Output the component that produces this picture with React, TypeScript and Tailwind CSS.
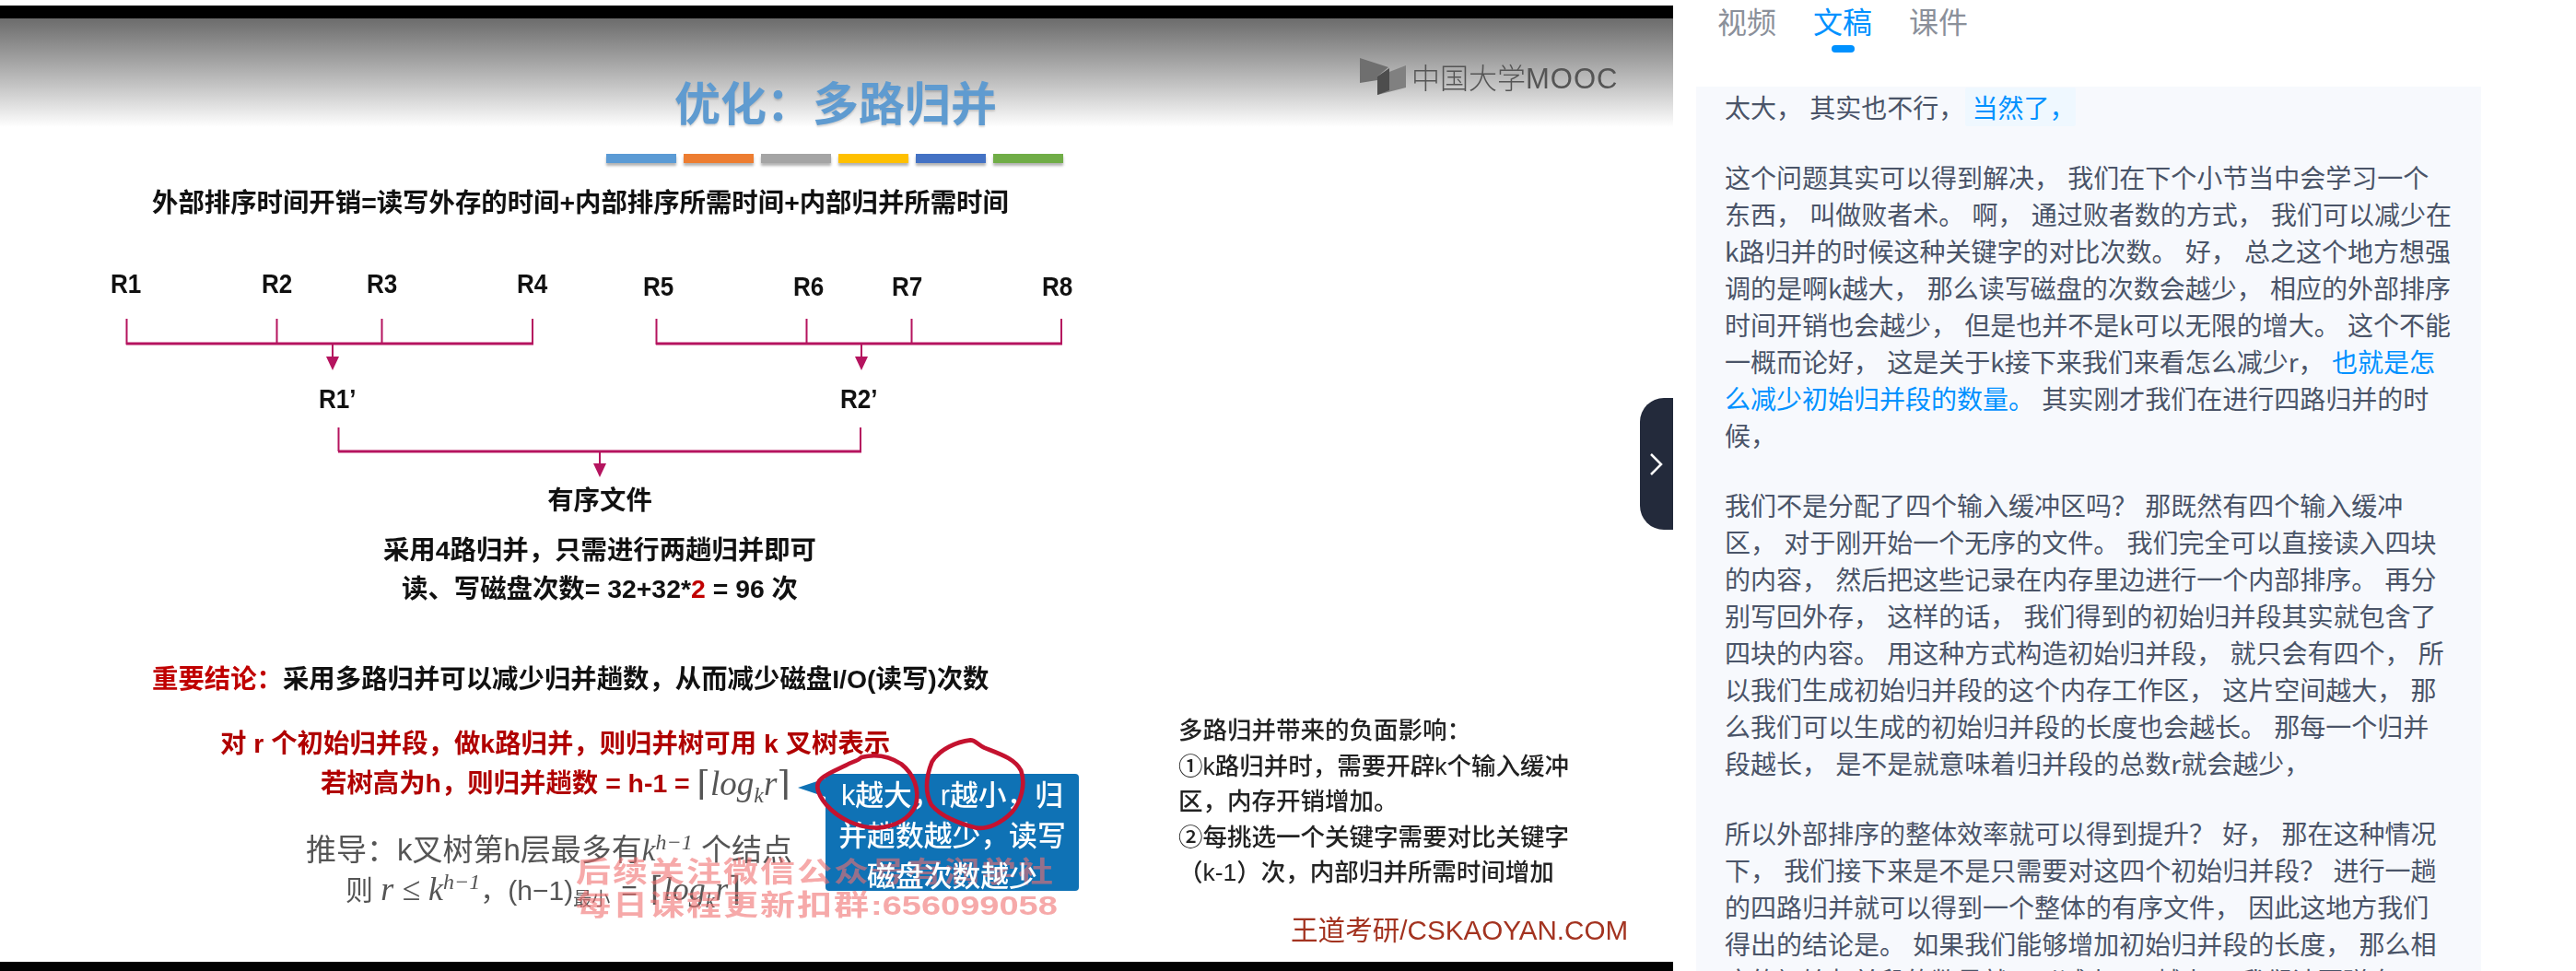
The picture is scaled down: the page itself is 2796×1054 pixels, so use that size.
const tabs = ['视频', '文稿', '课件']

const ruleBars = ['bg-[#5b9bd5]', 'bg-[#ed7d31]', 'bg-[#a5a5a5]', 'bg-[#ffc000]', 'bg-[#4472c4]', 'bg-[#70ad47]']

const topRuns = [
  { label: 'R1', pos: 'left-[120px] top-[273px]' },
  { label: 'R2', pos: 'left-[284px] top-[273px]' },
  { label: 'R3', pos: 'left-[398px] top-[273px]' },
  { label: 'R4', pos: 'left-[561px] top-[273px]' },
  { label: 'R5', pos: 'left-[698px] top-[276px]' },
  { label: 'R6', pos: 'left-[861px] top-[276px]' },
  { label: 'R7', pos: 'left-[968px] top-[276px]' },
  { label: 'R8', pos: 'left-[1131px] top-[276px]' },
  { label: 'R1’', pos: 'left-[346px] top-[398px]' },
  { label: 'R2’', pos: 'left-[912px] top-[398px]' },
]

function MergeDiagram() {
  const c = '#b5145f'
  return (
    <svg className="absolute left-0 top-0" width="1200" height="520" viewBox="0 20 1200 520" fill="none">
      <g stroke={c}>
        <path d="M137.500 346V374M300.500 346V374M414.500 346V374M578 346V374" strokeWidth="2" />
        <path d="M137 373H579" strokeWidth="3" />
        <path d="M712.500 346V374M875.500 346V374M989.500 346V374M1152 346V374" strokeWidth="2" />
        <path d="M712 373H1153" strokeWidth="3" />
        <path d="M361 374V390M935 374V390M651 491V506" strokeWidth="2" />
        <path d="M367.500 464V490M934 464V490" strokeWidth="2" />
        <path d="M367 490H935" strokeWidth="3" />
      </g>
      <g fill={c}>
        <path d="M354 387H368L361 402Z" />
        <path d="M928 387H942L935 402Z" />
        <path d="M644 503H658L651 518Z" />
      </g>
    </svg>
  )
}

function MoocLogo() {
  return (
    <div className="absolute left-[1476px] top-[43px] flex items-start gap-[6px]">
      <svg width="50" height="42" viewBox="0 0 50 42">
        <path d="M0 0L31 10L19 20V24L0 27Z" fill="#6f6f6f" />
        <path d="M19 20L50 8V32L19 40Z" fill="#808080" />
        <path d="M19 20L32 11V35L19 40Z" fill="#4d4d4d" />
      </svg>
      <span className="font-['Noto_Sans_CJK_SC',sans-serif] text-[31px] leading-[40px] font-light text-[#555]">
        中国大学<span className="font-['Liberation_Sans',sans-serif] tracking-[1px]">MOOC</span>
      </span>
    </div>
  )
}

function Ceil({ size }: { size: string }) {
  return (
    <span className={`inline-flex items-baseline font-['Liberation_Serif','DejaVu_Serif',serif] font-normal text-[#555] ${size}`}>
      <span className="font-['DejaVu_Serif',serif] font-extralight">⌈</span>
      <i>log</i>
      <i className="relative top-[8px] text-[0.65em]">k</i>
      <i>r</i>
      <span className="font-['DejaVu_Serif',serif] font-extralight">⌉</span>
    </span>
  )
}

function HandCircles() {
  return (
    <svg className="absolute left-[850px] top-[770px] z-30" width="340" height="190" viewBox="0 0 1020 570" fill="none">
      <g stroke="#c4122f" strokeWidth="14" strokeLinecap="round" strokeLinejoin="round">
        <path d="M205 122C225 108 240 112 255 96C300 85 345 92 385 118C425 150 445 200 432 252C410 300 360 322 305 326C240 325 180 295 140 250C112 215 100 185 125 165C150 145 180 135 205 122Z" />
        <path d="M610 40C625 40 635 55 655 65C705 85 755 100 775 140C790 185 775 240 745 275C710 312 665 330 630 326C570 312 510 285 482 250C462 210 465 160 485 110C510 70 565 45 610 40Z" />
      </g>
    </svg>
  )
}

function Slide() {
  return (
    <div className="relative flex-1 overflow-hidden bg-white blur-[0.5px] font-['Liberation_Sans','Noto_Sans_CJK_SC',sans-serif] text-[#111]">
      <div className="absolute inset-x-0 top-0 h-[118px] bg-gradient-to-b from-[#6c6c6c] to-white" />
      <MoocLogo />

      <h1 className="absolute left-[732px] top-[69px] text-[50px] leading-none font-bold text-[#5f9bd0] [text-shadow:0_2px_2px_rgba(0,0,0,0.15)]">
        优化：多路归并
      </h1>
      <div className="absolute left-[658px] top-[147px] flex gap-[8px]">
        {ruleBars.map(bar => (
          <div key={bar} className={`h-[10px] w-[76px] ${bar} shadow-[0_3px_3px_rgba(0,0,0,0.3)]`} />
        ))}
      </div>

      <p className="absolute left-[165px] top-[186px] text-[28.400px] leading-none font-bold whitespace-nowrap">
        外部排序时间开销=读写外存的时间+内部排序所需时间+内部归并所需时间
      </p>

      <MergeDiagram />
      {topRuns.map(run => (
        <span key={run.label} className={`absolute ${run.pos} origin-left scale-x-[0.87] text-[30px] leading-none font-bold`}>{run.label}</span>
      ))}

      <div className="absolute left-[415px] top-[509px] flex w-[472px] flex-col items-center text-[28.400px] leading-none font-bold whitespace-nowrap">
        <p>有序文件</p>
        <p className="mt-[26px]">采用4路归并，只需进行两趟归并即可</p>
        <p className="mt-[13px]">读、写磁盘次数= 32+32*<span className="text-[#c00000]">2</span> = 96 次</p>
      </div>

      <p className="absolute left-[165px] top-[703px] text-[28.400px] leading-none font-bold whitespace-nowrap">
        <span className="text-[#c00000]">重要结论：</span>采用多路归并可以减少归并趟数，从而减少磁盘I/O(读写)次数
      </p>

      <p className="absolute left-[239px] top-[773px] text-[28.400px] leading-none font-bold whitespace-nowrap text-[#b00000]">
        对 r 个初始归并段，做k路归并，则归并树可用 k 叉树表示
      </p>
      <div className="absolute left-[348px] top-[812px] flex items-center text-[28.400px] leading-none font-bold whitespace-nowrap text-[#b00000]">
        <span>若树高为h，则归并趟数 = h-1 =&nbsp;</span>
        <Ceil size="text-[37px]" />
      </div>

      <div className="absolute left-[866px] top-[825px] h-0 w-0 border-y-[10px] border-r-[30px] border-y-transparent border-r-[#0f72b5]" />
      <div className="absolute left-[896px] top-[820px] h-[127px] w-[275px] rounded-[4px] bg-[#0f72b5] pt-[2px] text-center text-[30.800px] leading-[44px] font-medium text-white">
        <p className="relative z-20 whitespace-nowrap">k越大，r越小，归</p>
        <p className="relative z-20 whitespace-nowrap">并趟数越少，读写</p>
        <p className="relative z-20 whitespace-nowrap">磁盘次数越少</p>
      </div>

      <p className="absolute left-[332px] top-[886px] text-[33px] leading-none whitespace-nowrap text-[#555]">
        推导：k叉树第h层最多有<i className="font-['Liberation_Serif',serif]">k<sup className="text-[24px]">h−1</sup></i>&nbsp;个结点
      </p>
      <div className="absolute left-[375px] top-[927px] flex items-baseline text-[30px] leading-none whitespace-nowrap text-[#555]">
        <span>则&nbsp;</span>
        <i className="font-['Liberation_Serif',serif] text-[36px]">r ≤ k<sup className="text-[24px]">h−1</sup></i>
        <span>，(h−1)</span>
        <span className="relative top-[6px] mr-[12px] text-[20px]">最小</span>
        <span className="mr-[14px]">=</span>
        <Ceil size="text-[36px]" />
      </div>

      <div className="absolute left-[625px] top-[909px] z-10 flex flex-col font-bold whitespace-nowrap text-[#f07070]/60">
        <p className="origin-left scale-y-[0.8] text-[38px] leading-[36px] tracking-[2px]">后续关注微信公众号有润学社</p>
        <p className="origin-left scale-y-[0.8] text-[38px] leading-[36px]"><span className="tracking-[2px]">每日课程更新扣群</span>:656099058</p>
      </div>

      <HandCircles />

      <div className="absolute left-[1279px] top-[754px] text-[26.500px] leading-[38.500px] font-medium whitespace-nowrap text-[#222]">
        多路归并带来的负面影响：<br />
        ①k路归并时，需要开辟k个输入缓冲<br />
        区，内存开销增加。<br />
        ②每挑选一个关键字需要对比关键字<br />
        （k-1）次，内部归并所需时间增加
      </div>

      <p className="absolute left-[1401px] top-[975px] text-[29.600px] leading-none whitespace-nowrap text-[#a33320]">
        王道考研/CSKAOYAN.COM
      </p>
    </div>
  )
}

function Transcript() {
  return (
    <div className="mt-[37px] ml-[25px] w-[852px] flex-1 overflow-hidden bg-[#f7f9fd] pt-[2px] pl-[31px] font-['Noto_Sans_CJK_SC',sans-serif] text-[28px] leading-[40px] whitespace-nowrap text-[#4a5468] [word-spacing:2px]">
      <div>
        太大， 其实也不行， <span className="-ml-2 rounded-[2px] bg-[#eff8ff] py-px pl-2 text-[#0091ff]">当然了，</span>
      </div>

      <div className="mt-[36px]">
        <div>这个问题其实可以得到解决， 我们在下个小节当中会学习一个</div>
        <div>东西， 叫做败者术。 啊， 通过败者数的方式， 我们可以减少在</div>
        <div>k路归并的时候这种关键字的对比次数。 好， 总之这个地方想强</div>
        <div>调的是啊k越大， 那么读写磁盘的次数会越少， 相应的外部排序</div>
        <div>时间开销也会越少， 但是也并不是k可以无限的增大。 这个不能</div>
        <div>一概而论好， 这是关于k接下来我们来看怎么减少r， <span className="text-[#0091ff]">也就是怎</span></div>
        <div><span className="text-[#0091ff]">么减少初始归并段的数量。</span> 其实刚才我们在进行四路归并的时</div>
        <div>候，</div>
      </div>

      <div className="mt-[36px]">
        <div>我们不是分配了四个输入缓冲区吗？ 那既然有四个输入缓冲</div>
        <div>区， 对于刚开始一个无序的文件。 我们完全可以直接读入四块</div>
        <div>的内容， 然后把这些记录在内存里边进行一个内部排序。 再分</div>
        <div>别写回外存， 这样的话， 我们得到的初始归并段其实就包含了</div>
        <div>四块的内容。 用这种方式构造初始归并段， 就只会有四个， 所</div>
        <div>以我们生成初始归并段的这个内存工作区， 这片空间越大， 那</div>
        <div>么我们可以生成的初始归并段的长度也会越长。 那每一个归并</div>
        <div>段越长， 是不是就意味着归并段的总数r就会越少，</div>
      </div>

      <div className="mt-[36px]">
        <div>所以外部排序的整体效率就可以得到提升？ 好， 那在这种情况</div>
        <div>下， 我们接下来是不是只需要对这四个初始归并段？ 进行一趟</div>
        <div>的四路归并就可以得到一个整体的有序文件， 因此这地方我们</div>
        <div>得出的结论是。 如果我们能够增加初始归并段的长度， 那么相</div>
        <div>应的初始归并段的数量就可以减少， r越少， 我们读写磁盘</div>
      </div>
    </div>
  )
}

export default function App() {
  return (
    <div className="flex h-[1054px] w-[2796px] overflow-hidden bg-white">
      <div className="relative flex w-[1816px] shrink-0 flex-col pt-[6px]">
        <div className="h-[14px] bg-black" />
        <Slide />
        <div className="h-[10px] bg-black" />
        <button className="absolute top-[432px] right-0 flex h-[143px] w-[36px] items-center justify-center rounded-l-[26px] bg-[#232a3b]">
          <svg width="16" height="26" viewBox="0 0 16 26" fill="none">
            <path d="M2 2L13 13L2 24" stroke="white" strokeWidth="2.500" />
          </svg>
        </button>
      </div>

      <div className="flex min-w-0 flex-1 flex-col">
        <div className="flex h-[57px] gap-[40px] pl-[48px] font-['Noto_Sans_CJK_SC',sans-serif] text-[32px] leading-[44px]">
          {tabs.map(tab => (
            <div key={tab} className={`relative ${tab === '文稿' ? 'text-[#0091ff]' : 'text-[#8b909a]'}`}>
              {tab}
              {tab === '文稿' && (
                <span className="absolute top-[49px] left-[20px] h-[8px] w-[25px] rounded-full bg-[#0091ff]" />
              )}
            </div>
          ))}
        </div>
        <Transcript />
      </div>
    </div>
  )
}
